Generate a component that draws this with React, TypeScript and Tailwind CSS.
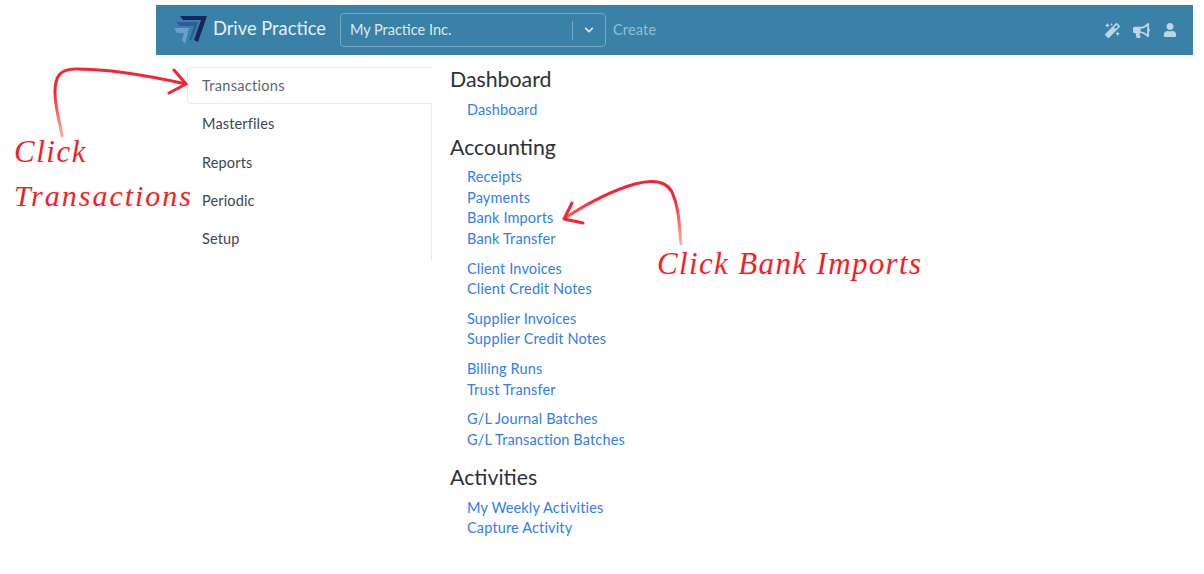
import { FaMagic, FaBullhorn, FaUser, FaChevronDown } from "react-icons/fa";

const groups: { title: string; sets: string[][] }[] = [
  { title: "Dashboard", sets: [["Dashboard"]] },
  {
    title: "Accounting",
    sets: [
      ["Receipts", "Payments", "Bank Imports", "Bank Transfer"],
      ["Client Invoices", "Client Credit Notes"],
      ["Supplier Invoices", "Supplier Credit Notes"],
      ["Billing Runs", "Trust Transfer"],
      ["G/L Journal Batches", "G/L Transaction Batches"],
    ],
  },
  { title: "Activities", sets: [["My Weekly Activities", "Capture Activity"]] },
];

const side = ["Masterfiles", "Reports", "Periodic", "Setup"];

const hand = "absolute text-[#f91c24] italic font-['Liberation_Serif',serif] leading-[30px] whitespace-nowrap";

export default function App() {
  return (
    <div className="relative w-[1204px] h-[574px] overflow-hidden bg-white pt-[5px] font-['Lato','Noto_Sans',sans-serif]">
      <header className="ml-[156px] w-[1037px] h-[50px] bg-[#3a81a8] flex items-center pl-[18px] pr-[16px]">
        <svg width="34" height="30" viewBox="0 0 34 30" className="shrink-0">
          <polygon points="6,1 33,1 24,27 20,25 27,5 9,5" fill="#16265c" />
          <polygon points="2,7 24,7 18,24 15,26 20,11 6,11" fill="#2f5b9a" />
          <polygon points="0,13 15,13 11,29 8,25 10,18 3,18" fill="#6d9fcb" />
        </svg>
        <span className="ml-[5px] -mt-[4px] text-[18.3px] leading-none text-[#e4eff6]">Drive Practice</span>
        <div className="ml-[14px] w-[266px] h-[34px] rounded-[4px] border border-[#76a7c3] flex items-center pl-[9px]">
          <span className="flex-1 text-[14.5px] text-[#dce9f1]">My Practice Inc.</span>
          <span className="w-px h-[19px] bg-[#76a7c3]" />
          <span className="w-[32px] flex justify-center text-[#dce9f1]"><FaChevronDown size={10} /></span>
        </div>
        <span className="ml-[7px] text-[14.5px] text-[#93bdd6] tracking-[0.2px]">Create</span>
        <div className="ml-auto flex items-center gap-[13px] text-[#bcd6e6]">
          <FaMagic size={15} />
          <FaBullhorn size={17} />
          <FaUser size={14} />
        </div>
      </header>

      <div className="flex mt-[12px] ml-[187px]">
        <nav className="w-[245px] h-[193px] text-[14.5px] text-[#3d4650] tracking-[0.15px]">
          <div className="h-[37px] flex items-center pl-[14px] border border-r-0 border-[#e9ebee] rounded-l-[4px] text-[#5c6670] tracking-[0.3px]">Transactions</div>
          <div className="border-r border-[#e9ebee] pt-[1px] pb-[2px]">
            {side.map((s) => (
              <div key={s} className="h-[38.4px] flex items-center pl-[15px]">{s}</div>
            ))}
          </div>
        </nav>
        <main className="ml-[18px] -mt-[1px]">
          {groups.map((g) => (
            <section key={g.title} className="mb-[13.5px]">
              <h2 className="text-[21.3px] leading-[26px] text-[#2c3238] mb-[7.6px]">{g.title}</h2>
              {g.sets.map((set, i) => (
                <ul key={i} className="pl-[17px] mb-[9px] last:mb-0 text-[14.5px] leading-[20.6px] text-[#2f7cf6] tracking-[0.15px]">
                  {set.map((l) => <li key={l}>{l}</li>)}
                </ul>
              ))}
            </section>
          ))}
        </main>
      </div>

      <svg className="absolute left-0 top-0 pointer-events-none" width="1204" height="574" fill="none" stroke="#fa2230" strokeLinecap="round" strokeLinejoin="round">
        <defs>
          <linearGradient id="tailA" gradientUnits="userSpaceOnUse" x1="0" y1="138" x2="0" y2="92">
            <stop offset="0" stopColor="#ffb4a0" />
            <stop offset="1" stopColor="#fa2230" />
          </linearGradient>
          <linearGradient id="tailB" gradientUnits="userSpaceOnUse" x1="0" y1="245" x2="0" y2="198">
            <stop offset="0" stopColor="#ffb4a0" />
            <stop offset="1" stopColor="#fa2230" />
          </linearGradient>
        </defs>
        <path d="M62 136 C60 122 55 108 55 92 C55 76 60 69 76 69 C110 69 150 76 186 84" strokeWidth="3" stroke="url(#tailA)" />
        <path d="M174 70 L186 84 L169 93" strokeWidth="3" />
        <path d="M681 244 C679 228 680 210 672 192 C665 179 650 180 635 184 C610 191 585 205 565 218" strokeWidth="3" stroke="url(#tailB)" />
        <path d="M572 203 L564 219 L583 223" strokeWidth="3" />
      </svg>
      <span className={hand + " text-[31px] tracking-[1.5px] left-[14px] top-[137px]"}>Click</span>
      <span className={hand + " text-[30px] tracking-[2px] left-[14px] top-[181px]"}>Transactions</span>
      <span className={hand + " text-[31px] tracking-[1.35px] left-[657px] top-[249px]"}>Click Bank Imports</span>
    </div>
  );
}
